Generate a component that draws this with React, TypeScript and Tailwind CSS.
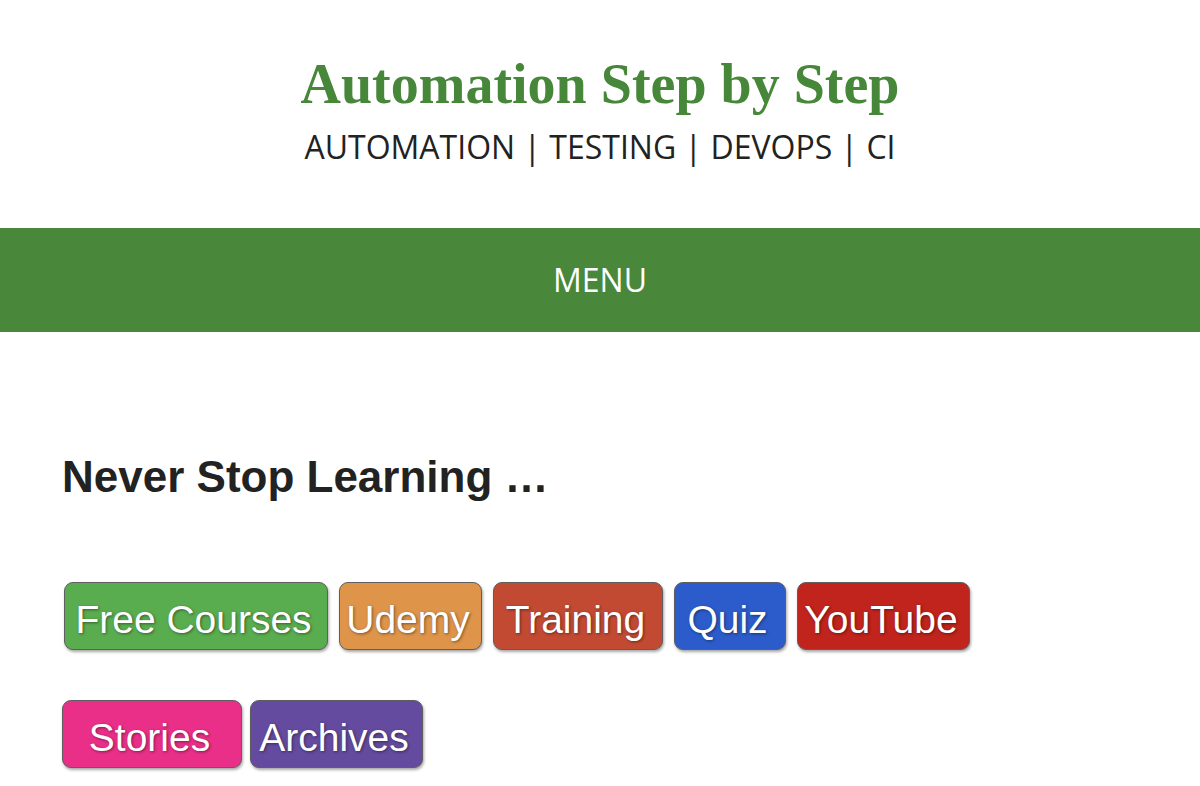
const buttons1 = [
  { label: "Free Courses", bg: "bg-[#5aad4f]", w: "w-[264px]" },
  { label: "Udemy", bg: "bg-[#de954a]", w: "w-[143px]" },
  { label: "Training", bg: "bg-[#c24a33]", w: "w-[170px]" },
  { label: "Quiz", bg: "bg-[#2c5ccb]", w: "w-[112px]" },
  { label: "YouTube", bg: "bg-[#c0241c]", w: "w-[173px]" },
];

const buttons2 = [
  { label: "Stories", bg: "bg-[#ea2f88]", w: "w-[180px]" },
  { label: "Archives", bg: "bg-[#644b9f]", w: "w-[173px]" },
];

function TagButton({ label, bg, w }: { label: string; bg: string; w: string }) {
  return (
    <a
      href="#"
      className={`${bg} ${w} h-[68px] flex items-center justify-center pt-[6px] pr-[5px] rounded-[9px] border border-[#5f5f5f] text-white text-[39px] leading-none shadow-[1px_2px_3px_rgba(0,0,0,0.35)] [text-shadow:1px_1px_3px_rgba(0,0,0,0.45)]`}
      style={{ fontFamily: '"Liberation Sans", Arial, sans-serif' }}
    >
      {label}
    </a>
  );
}

export default function App() {
  return (
    <div className="min-h-[786px] bg-white">
      <header className="pt-[52px] text-center">
        <h1
          className="text-[56px] leading-[64px] font-bold text-[#478739]"
          style={{ fontFamily: '"Liberation Serif", "Times New Roman", serif' }}
        >
          Automation Step by Step
        </h1>
        <p
          className="mt-[11px] text-[32px] leading-[40px] text-[#222]"
          style={{ fontFamily: '"Open Sans", sans-serif' }}
        >
          AUTOMATION | TESTING | DEVOPS | CI
        </p>
      </header>

      <nav className="mt-[61px] h-[104px] bg-[#49873b] flex items-center justify-center">
        <span
          className="text-white text-[32px]"
          style={{ fontFamily: '"Open Sans", sans-serif' }}
        >
          MENU
        </span>
      </nav>

      <main className="px-[62px] pt-[119px]">
        <h2
          className="text-[44px] leading-[52px] font-bold text-[#222]"
          style={{ fontFamily: '"Liberation Sans", Arial, sans-serif' }}
        >
          Never Stop Learning …
        </h2>
        <div className="mt-[79px] flex flex-col gap-[50px]">
          <div className="flex gap-[11px] pl-[2px]">
            {buttons1.map((b) => (
              <TagButton key={b.label} {...b} />
            ))}
          </div>
          <div className="flex gap-[8px]">
            {buttons2.map((b) => (
              <TagButton key={b.label} {...b} />
            ))}
          </div>
        </div>
      </main>
    </div>
  );
}
